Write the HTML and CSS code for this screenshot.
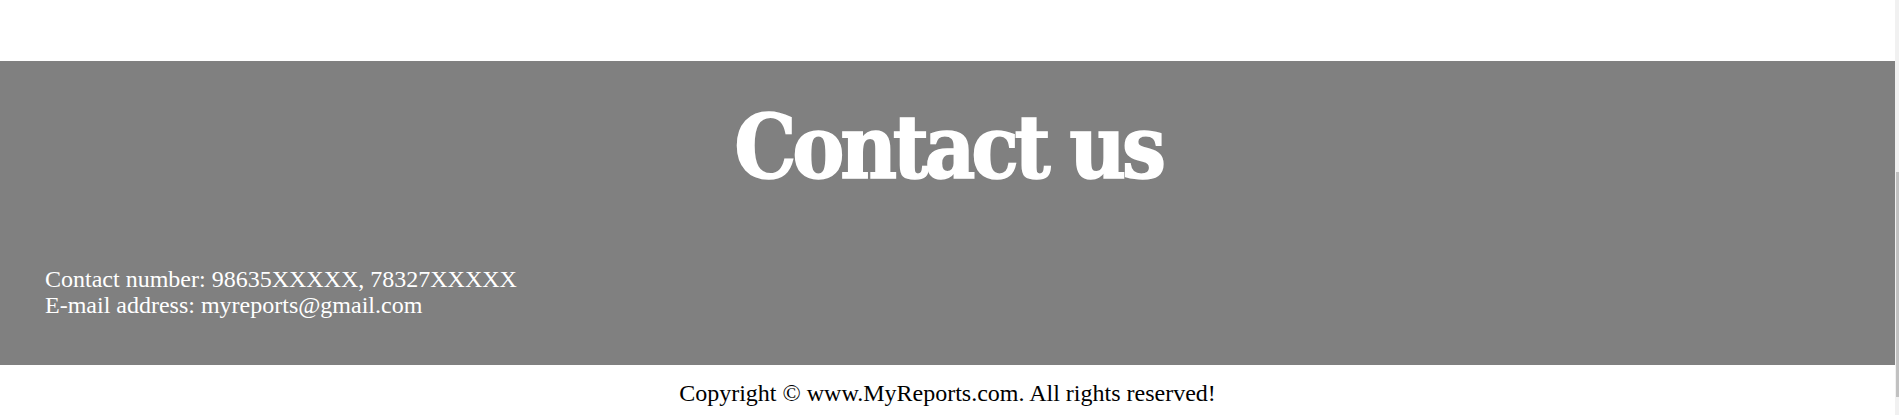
FILE: index.html
```html
<!DOCTYPE html>
<html lang="en">
<head>
<meta charset="utf-8">
<title>Contact us</title>
<link rel="stylesheet" href="styles.css">
</head>
<body>
<div class="page">
  <div class="above"></div>
  <section class="contact">
    <h1 class="contact-title">Contact us</h1>
    <div class="contact-info">
      <p class="contact-line">Contact number: 98635XXXXX, 78327XXXXX</p>
      <p class="contact-line">E-mail address: myreports@gmail.com</p>
    </div>
  </section>
  <footer class="footer">
    <p class="copyright">Copyright © www.MyReports.com. All rights reserved!</p>
  </footer>
</div>
<div class="scrollbar"><div class="scrollbar-thumb"></div></div>
</body>
</html>
```
FILE: styles.css
```css
html, body {
  margin: 0;
  padding: 0;
  background: #ffffff;
  overflow: hidden;
}

.page {
  margin-right: 4px;
  font-family: "Liberation Serif", "Times New Roman", serif;
  font-size: 24px;
}

.above {
  height: 61px;
}

.contact {
  background: #808080;
  color: #ffffff;
  padding: 38px 44px 47px 45px;
  height: 304px;
  box-sizing: border-box;
  display: flex;
  flex-direction: column;
}

.contact-title {
  margin: 0;
  text-align: center;
  font-family: "DejaVu Serif Condensed", "DejaVu Serif", serif;
  font-weight: bold;
  font-size: 87px;
  letter-spacing: -4.3px;
  line-height: 98px;
  -webkit-text-stroke: 1.5px #ffffff;
}

.contact-info {
  margin-top: auto;
}

.contact-line {
  margin: 0;
  line-height: 26px;
}

.footer {
  padding-top: 15px;
  text-align: center;
  color: #000000;
}

.copyright {
  margin: 0;
  line-height: 27px;
}

.scrollbar {
  position: fixed;
  top: 0;
  right: 0;
  width: 4px;
  height: 100%;
  background: #f1f1f1;
}

.scrollbar-thumb {
  position: absolute;
  top: 172px;
  right: 0;
  width: 3px;
  height: 225px;
  background: #c1c1c1;
}
```
